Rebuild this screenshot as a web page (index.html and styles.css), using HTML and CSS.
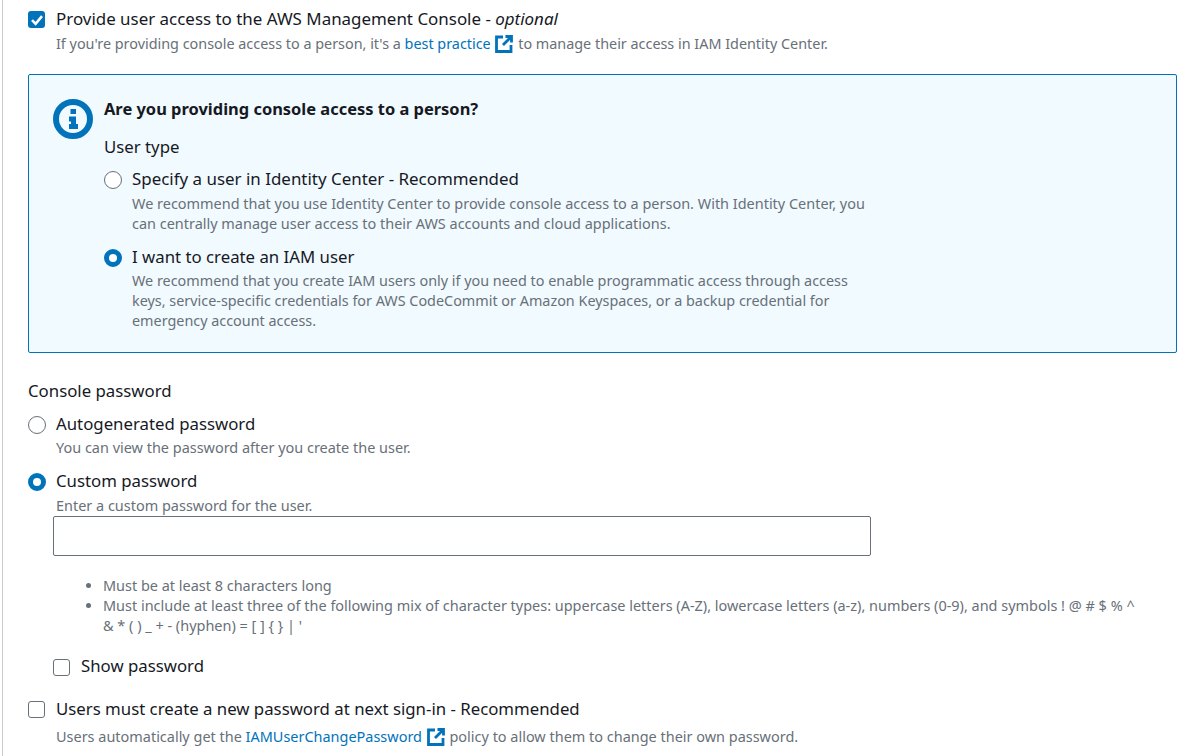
FILE: index.html
```html
<!DOCTYPE html>
<html lang="en">
<head>
    <meta charset="UTF-8">
    <title>Console access</title>
    <link rel="stylesheet" href="styles.css">
</head>
<body>
    <div class="page">
        <div class="option">
            <span class="checkbox checked">
                <svg viewBox="0 0 18 18" width="18" height="18"><path d="M4 9.2l3.6 3.6L14 5.2" fill="none" stroke="#fff" stroke-width="2.6"/></svg>
            </span>
            <div>
                <div class="label wide">Provide user access to the AWS Management Console - <em>optional</em></div>
                <div class="desc tight">If you're providing console access to a person, it's a <a href="#">best practice</a>
                    <svg class="ext" viewBox="0 0 18 18" width="18" height="18"><path d="M8 2H1.500v14.500H16V10" fill="none" stroke="#0073bb" stroke-width="2.8"/><path d="M10.500 1.500h6v6M16 2L8 10" fill="none" stroke="#0073bb" stroke-width="2.8"/></svg>
                    to manage their access in IAM Identity Center.</div>
            </div>
        </div>

        <div class="info-box">
            <svg class="info-icon" viewBox="0 0 40 40" width="40" height="40">
                <circle cx="20" cy="20" r="17" fill="none" stroke="#0073bb" stroke-width="6"/>
                <rect x="17.5" y="10" width="5.500" height="5" fill="#0073bb"/>
                <path d="M16 17.500h7v7.500h2v5H16v-5h2v-2.500h-2z" fill="#0073bb"/>
            </svg>
            <div>
                <div class="info-title">Are you providing console access to a person?</div>
                <div class="group-label">User type</div>
                <div class="option user-first">
                    <span class="radio"></span>
                    <div>
                        <div class="label wide">Specify a user in Identity Center - Recommended</div>
                        <div class="desc">We recommend that you use Identity Center to provide console access to a person. With Identity Center, you<br>can centrally manage user access to their AWS accounts and cloud applications.</div>
                    </div>
                </div>
                <div class="option user-second">
                    <span class="radio selected"></span>
                    <div>
                        <div class="label">I want to create an IAM user</div>
                        <div class="desc tight">We recommend that you create IAM users only if you need to enable programmatic access through access<br>keys, service-specific credentials for AWS CodeCommit or Amazon Keyspaces, or a backup credential for<br>emergency account access.</div>
                    </div>
                </div>
            </div>
        </div>

        <div class="group-label password-label">Console password</div>
        <div class="option auto">
            <span class="radio"></span>
            <div>
                <div class="label">Autogenerated password</div>
                <div class="desc">You can view the password after you create the user.</div>
            </div>
        </div>
        <div class="option custom">
            <span class="radio selected"></span>
            <div>
                <div class="label">Custom password</div>
                <div class="desc">Enter a custom password for the user.</div>
            </div>
        </div>
        <div class="password-wrap">
            <input type="text" class="input-field">
            <ul class="rules">
                <li>Must be at least 8 characters long</li>
                <li>Must include at least three of the following mix of character types: uppercase letters (A-Z), lowercase letters (a-z), numbers (0-9), and symbols ! @ # $ % ^ &amp; * ( ) _ + - (hyphen) = [ ] { } | '</li>
            </ul>
            <div class="option">
                <span class="checkbox"></span>
                <div class="label">Show password</div>
            </div>
        </div>
        <div class="option reset">
            <span class="checkbox"></span>
            <div>
                <div class="label">Users must create a new password at next sign-in - Recommended</div>
                <div class="desc">Users automatically get the <a href="#">IAMUserChangePassword</a>
                    <svg class="ext" viewBox="0 0 18 18" width="18" height="18"><path d="M8 2H1.500v14.500H16V10" fill="none" stroke="#0073bb" stroke-width="2.8"/><path d="M10.500 1.500h6v6M16 2L8 10" fill="none" stroke="#0073bb" stroke-width="2.8"/></svg>
                    policy to allow them to change their own password.</div>
            </div>
        </div>
    </div>
</body>
</html>
```
FILE: styles.css
```css
html, body {
    margin: 0;
    height: 756px;
    overflow: hidden;
    background-color: #fff;
}
body {
    font-family: "Noto Sans", "Open Sans", sans-serif;
    color: #16191f;
}
.page {
    height: 756px;
    box-sizing: border-box;
    margin-left: 2px;
    border-left: 1px solid #ccc;
    padding: 7px 23px 0 25px;
}
.option {
    display: flex;
    align-items: flex-start;
    gap: 11px;
}
.label {
    font-size: 16.8px;
    line-height: 24px;
}
.label.wide {
    font-size: 16.93px;
}
.desc {
    font-size: 14.46px;
    line-height: 20px;
    color: #687078;
    margin-top: 3px;
}
.desc.tight {
    font-size: 14.38px;
}
.desc a {
    color: #0073bb;
    text-decoration: none;
}
.ext {
    vertical-align: -4px;
    margin: 0 1px;
}
.checkbox {
    flex: none;
    width: 15px;
    height: 15px;
    margin-top: 4px;
    border: 1px solid #687078;
    border-radius: 3px;
}
.checkbox.checked {
    width: 17px;
    height: 17px;
    border: none;
    background-color: #0073bb;
}
.checkbox svg {
    display: block;
}
.radio {
    flex: none;
    width: 16px;
    height: 16px;
    margin-top: 4px;
    margin-right: -1px;
    border: 1px solid #687078;
    border-radius: 50%;
    background-color: #fff;
}
.radio.selected {
    width: 8px;
    height: 8px;
    border: 5px solid #0073bb;
}
.info-box {
    display: flex;
    gap: 11px;
    height: 279px;
    box-sizing: border-box;
    margin-top: 20px;
    padding: 24px 24px 0;
    background-color: #f1faff;
    border: 1px solid #0073bb;
    border-radius: 2px;
}
.info-icon {
    flex: none;
}
.info-title {
    font-size: 16.45px;
    font-weight: 700;
    line-height: 24px;
    margin-top: -2px;
}
.group-label {
    font-size: 16.8px;
    line-height: 24px;
    margin-top: 14px;
}
.user-first {
    margin-top: 8px;
}
.user-second {
    margin-top: 11px;
}
.user-second .desc {
    margin-top: 2px;
}
.password-label {
    margin-top: 26px;
}
.auto {
    margin-top: 9px;
}
.auto .desc {
    margin-top: 2px;
}
.custom {
    margin-top: 11px;
}
.password-wrap {
    margin-left: 25px;
}
.input-field {
    display: block;
    width: 818px;
    height: 40px;
    box-sizing: border-box;
    border: 1px solid #687078;
    border-radius: 2px;
    background-color: #fff;
}
.rules {
    margin: 20px 30px 0 0;
    padding-left: 50px;
    font-size: 14.46px;
    line-height: 20px;
    color: #687078;
}
.password-wrap .option {
    margin-top: 18px;
}
.password-wrap .checkbox {
    margin-top: 5px;
}
.reset {
    margin-top: 19px;
}
.reset .desc {
    margin-top: 6px;
}
```
